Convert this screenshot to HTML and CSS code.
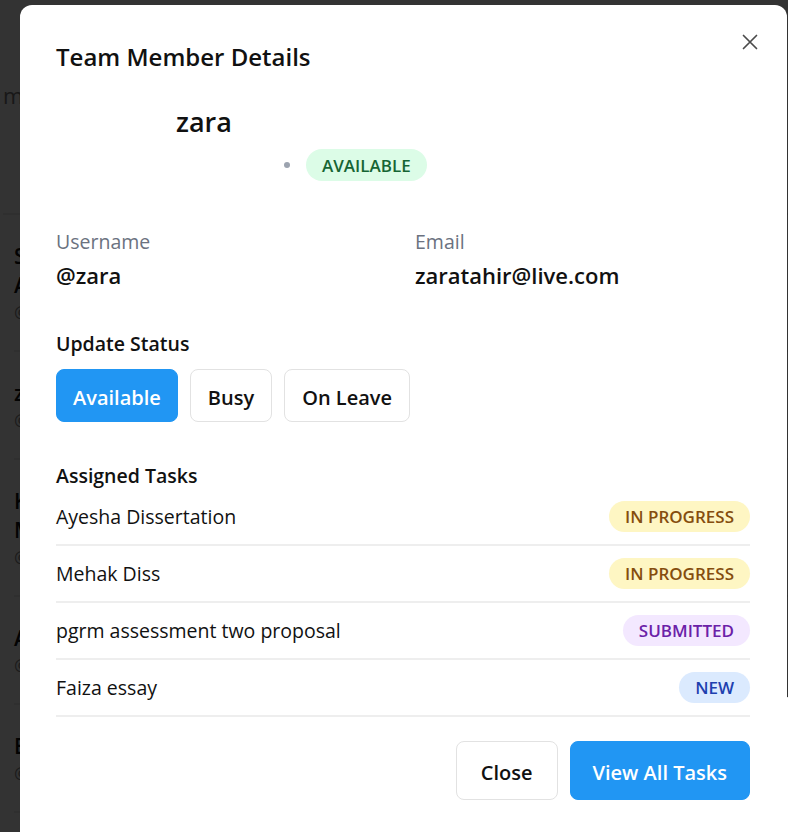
FILE: index.html
```html
<!DOCTYPE html>
<html lang="en">
<head>
<meta charset="utf-8">
<title>Team Member Details</title>
<link rel="stylesheet" href="styles.css">
</head>
<body>
<div class="page">
  <div class="page-head"><span class="page-sub">members</span></div>
  <ul class="member-list">
    <li class="member"><div class="m-name">Sana<br>Ahmed</div><div class="m-handle">@sana</div></li>
    <li class="member"><div class="m-name">zara</div><div class="m-handle">@zara</div></li>
    <li class="member"><div class="m-name">Kinza<br>Malik</div><div class="m-handle">@kinza</div></li>
    <li class="member"><div class="m-name">Ayesha</div><div class="m-handle">@ayesha</div></li>
    <li class="member"><div class="m-name">Eman</div><div class="m-handle">@eman</div></li>
  </ul>
</div>
<div class="overlay"></div>
<div class="side-card"></div>
<div class="modal" role="dialog" aria-labelledby="mtitle">
  <h2 class="modal-title" id="mtitle">Team Member Details</h2>
  <button class="close-x" aria-label="Close">
    <svg width="16" height="16" viewBox="0 0 16 16"><path d="M1.5 1.5L14.5 14.5M14.5 1.5L1.5 14.5" stroke="#4b4b4b" stroke-width="1.7" stroke-linecap="round" fill="none"/></svg>
  </button>
  <div class="profile">
    <div class="avatar"></div>
    <div class="profile-info">
      <div class="profile-name">zara</div>
      <div class="profile-status"><span class="dot"></span><span class="badge badge-green">AVAILABLE</span></div>
    </div>
  </div>
  <div class="fields">
    <div class="field"><div class="field-label">Username</div><div class="field-value">@zara</div></div>
    <div class="field"><div class="field-label">Email</div><div class="field-value">zaratahir@live.com</div></div>
  </div>
  <h3 class="section-title">Update Status</h3>
  <div class="status-btns">
    <button class="btn btn-primary">Available</button>
    <button class="btn btn-outline">Busy</button>
    <button class="btn btn-outline">On Leave</button>
  </div>
  <h3 class="section-title tasks-title">Assigned Tasks</h3>
  <ul class="tasks">
    <li class="task"><span>Ayesha Dissertation</span><span class="badge badge-yellow">IN PROGRESS</span></li>
    <li class="task"><span>Mehak Diss</span><span class="badge badge-yellow">IN PROGRESS</span></li>
    <li class="task"><span>pgrm assessment two proposal</span><span class="badge badge-purple">SUBMITTED</span></li>
    <li class="task"><span>Faiza essay</span><span class="badge badge-blue">NEW</span></li>
  </ul>
  <div class="footer">
    <button class="btn btn-outline btn-lg btn-close">Close</button>
    <button class="btn btn-primary btn-lg">View All Tasks</button>
  </div>
</div>
</body>
</html>
```
FILE: styles.css
```css
* { box-sizing: border-box; }
html, body { margin: 0; height: 100%; }
body {
  font-family: "Open Sans", "Noto Sans", sans-serif;
  color: #111;
  background: #fff;
  overflow: hidden;
}
.page { padding-left: 14px; }
.page-head { height: 215px; border-bottom: 2px solid #ececec; padding-top: 80px; margin-left: -11px; }
.page-sub { font-size: 22px; color: #777; }
.member-list { list-style: none; margin: 0; padding: 0; }
.member { padding: 27px 0 26px; border-bottom: 2px solid #ececec; }
.m-name { font-size: 21px; font-weight: 600; line-height: 29px; color: #111; }
.m-handle { font-size: 17px; line-height: 24px; color: #888; }
.overlay { position: fixed; inset: 0; background: rgba(0,0,0,0.8); }
.side-card {
  position: absolute; left: 758px; top: 697px; width: 60px; height: 200px;
  background: #fff; border: 1px solid #e3e3e3; border-radius: 8px;
}
.modal {
  position: absolute; left: 20px; top: 5px; width: 767px; height: 860px;
  background: #fff; border-radius: 12px;
  padding: 36px 37px 30px 36px;
}
.modal-title { margin: 0; font-size: 24px; line-height: 32px; font-weight: 600; color: #111; }
.close-x {
  position: absolute; top: 29px; right: 29px; width: 16px; height: 16px;
  padding: 0; border: 0; background: none; display: flex;
}
.profile { display: flex; gap: 16px; margin-top: 33px; }
.avatar { width: 104px; flex: none; }
.profile-name { font-size: 27px; line-height: 32px; font-weight: 600; }
.profile-status { display: flex; align-items: center; gap: 16px; margin-top: 11px; padding-left: 108px; }
.dot { width: 6px; height: 6px; border-radius: 50%; background: #9ca3af; }
.badge {
  display: inline-flex; align-items: center; height: 31px; padding: 0 16px;
  border-radius: 16px; font-size: 17px; font-weight: 600;
}
.profile-status .badge { height: 32px; }
.badge-green { background: #dcfce7; color: #166534; }
.badge-yellow { background: #fef6c3; color: #854d0e; }
.badge-purple { background: #f3e8ff; color: #6b21a8; }
.badge-blue { background: #dbeafe; color: #1e40af; }
.fields { display: grid; grid-template-columns: 1fr 1fr; gap: 24px; margin-top: 49px; }
.field-label { font-size: 19.5px; line-height: 24px; color: #6b7280; }
.field-value { font-size: 22px; line-height: 28px; font-weight: 600; margin-top: 7px; color: #111; }
.section-title { margin: 43px 0 0; font-size: 19.5px; line-height: 24px; font-weight: 600; color: #111; }
.status-btns { display: flex; gap: 12px; margin-top: 13px; }
.btn {
  font-family: inherit; font-size: 20px; font-weight: 600; height: 53px;
  padding: 3px 16px 0; border-radius: 8px; cursor: pointer;
}
.btn-primary { background: #2196f3; color: #fff; border: 1px solid #2196f3; }
.btn-outline { background: #fff; color: #111; border: 1px solid #e2e2e2; }
.status-btns .btn-outline { padding: 3px 17px 0; }
.tasks-title { margin-top: 42px; }
.tasks { list-style: none; margin: 1px 0 0; padding: 0; }
.task {
  display: flex; justify-content: space-between; align-items: center;
  padding: 12px 0; border-bottom: 2px solid #eeeeee; font-size: 19.5px; color: #111;
}
.footer { display: flex; justify-content: flex-end; gap: 12px; margin-top: 24px; }
.btn-lg { height: 59px; padding: 3px 22px 0; }
.btn-close { padding: 3px 24px 0; }
```
